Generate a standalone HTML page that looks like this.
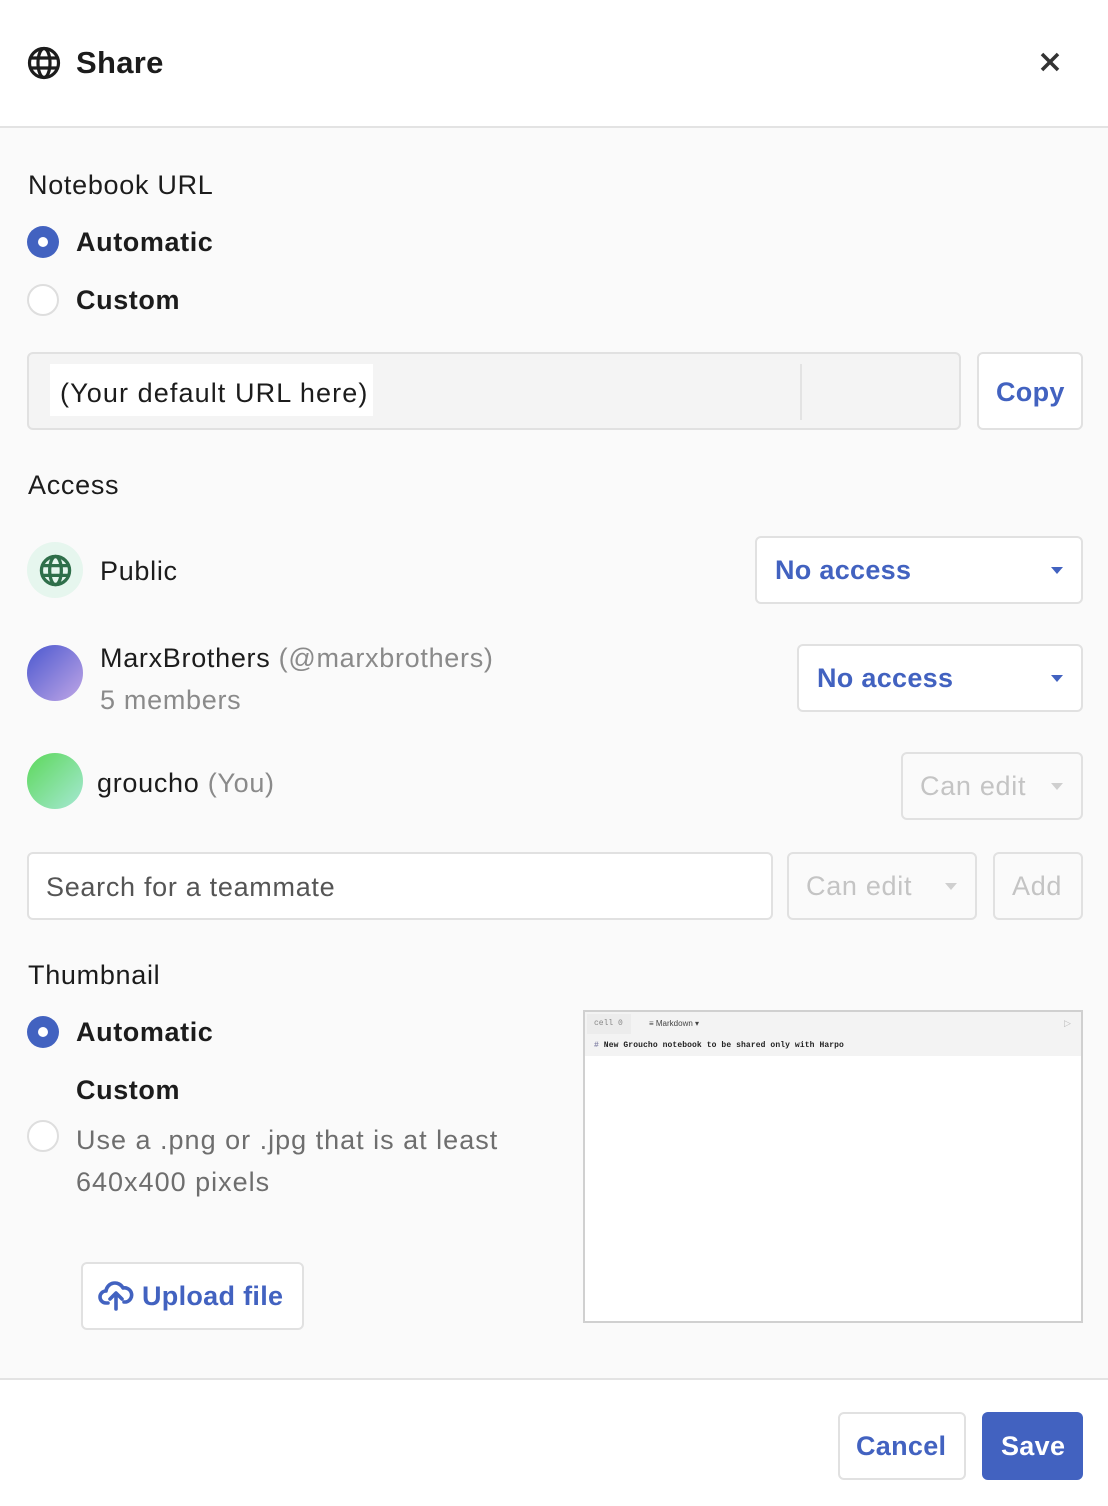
<!DOCTYPE html>
<html><head><meta charset="utf-8"><style>
*{box-sizing:border-box;margin:0;padding:0}
body{width:1108px;height:1506px;background:#fafafa;font-family:"Liberation Sans",sans-serif;color:#1c1c1c;position:relative;overflow:hidden;font-size:27px;letter-spacing:0.7px}
.a{position:absolute;white-space:nowrap;line-height:1}
.hdr{position:absolute;left:0;top:0;width:1108px;height:128px;background:#fff;border-bottom:2px solid #e3e3e3}
.ftr{position:absolute;left:0;top:1378px;width:1108px;height:128px;background:#fff;border-top:2px solid #e3e3e3}
.box{position:absolute;border:2px solid #e1e1e1;border-radius:6px;background:#fff}
.blue{color:#4262c0;font-weight:bold;letter-spacing:0.3px}
.gray{color:#8a8a8a}
.radio{position:absolute;width:32px;height:32px;border-radius:50%}
.on{background:#4262c0}
.on::after{content:"";position:absolute;left:11px;top:11px;width:10px;height:10px;border-radius:50%;background:#fff}
.off{background:#fff;border:2px solid #dedede}
.tri{position:absolute;width:0;height:0;border-left:6px solid transparent;border-right:6px solid transparent;border-top:7px solid #4262c0}
.trig{border-top-color:#cfcfcf}
.b{font-weight:bold;letter-spacing:0.6px}
</style></head><body>
<div class="hdr"></div>
<svg class="a" style="left:27px;top:46px" width="34" height="34" viewBox="0 0 34 34" fill="none" stroke="#1c1c1c" stroke-width="3.2"><circle cx="17" cy="17" r="14.5"/><ellipse cx="17" cy="17" rx="6" ry="14.5"/><line x1="2.5" y1="12" x2="31.5" y2="12"/><line x1="2.5" y1="22" x2="31.5" y2="22"/></svg>
<div class="a" style="left:76px;top:47px;font-size:31px;font-weight:bold;letter-spacing:0.3px">Share</div>
<svg class="a" style="left:1040px;top:52px" width="20" height="20" viewBox="0 0 20 20" stroke="#333" stroke-width="3.5"><line x1="2" y1="2" x2="18" y2="18"/><line x1="18" y1="2" x2="2" y2="18"/></svg>

<div class="a" style="left:28px;top:172px">Notebook URL</div>
<div class="radio on" style="left:27px;top:226px"></div>
<div class="a b" style="left:76px;top:229px">Automatic</div>
<div class="radio off" style="left:27px;top:284px"></div>
<div class="a b" style="left:76px;top:287px">Custom</div>

<div class="box" style="left:27px;top:352px;width:934px;height:78px;background:#f4f4f4"></div>
<div class="a" style="left:50px;top:364px;width:323px;height:52px;background:#fff"></div>
<div class="a" style="left:60px;top:380px;letter-spacing:1.1px">(Your default URL here)</div>
<div class="a" style="left:800px;top:364px;width:2px;height:56px;background:#e3e3e3"></div>
<div class="box" style="left:977px;top:352px;width:106px;height:78px"></div>
<div class="a blue" style="left:996px;top:379px">Copy</div>

<div class="a" style="left:28px;top:472px">Access</div>
<div class="a" style="left:27px;top:542px;width:56px;height:56px;border-radius:50%;background:#e6f6ee"></div>
<svg class="a" style="left:39px;top:554px" width="33" height="33" viewBox="0 0 34 34" fill="none" stroke="#2f6f4a" stroke-width="3.4"><circle cx="17" cy="17" r="14.5"/><ellipse cx="17" cy="17" rx="6" ry="14.5"/><line x1="2.5" y1="12" x2="31.5" y2="12"/><line x1="2.5" y1="22" x2="31.5" y2="22"/></svg>
<div class="a" style="left:100px;top:558px">Public</div>
<div class="box" style="left:755px;top:536px;width:328px;height:68px"></div>
<div class="a blue" style="left:775px;top:557px">No access</div>
<div class="tri" style="left:1051px;top:567px"></div>

<div class="a" style="left:27px;top:645px;width:56px;height:56px;border-radius:50%;background:linear-gradient(135deg,#4b58cf,#c0a6e6)"></div>
<div class="a" style="left:100px;top:645px">MarxBrothers <span class="gray">(@marxbrothers)</span></div>
<div class="a gray" style="left:100px;top:687px">5 members</div>
<div class="box" style="left:797px;top:644px;width:286px;height:68px"></div>
<div class="a blue" style="left:817px;top:665px">No access</div>
<div class="tri" style="left:1051px;top:675px"></div>

<div class="a" style="left:27px;top:753px;width:56px;height:56px;border-radius:50%;background:linear-gradient(135deg,#5cd85a,#a6e8d4)"></div>
<div class="a" style="left:97px;top:770px">groucho <span class="gray">(You)</span></div>
<div class="box" style="left:901px;top:752px;width:182px;height:68px;background:#fafafa"></div>
<div class="a" style="left:920px;top:773px;color:#c4c4c4">Can edit</div>
<div class="tri trig" style="left:1051px;top:783px"></div>

<div class="box" style="left:27px;top:852px;width:746px;height:68px"></div>
<div class="a" style="left:46px;top:874px;color:#555">Search for a teammate</div>
<div class="box" style="left:787px;top:852px;width:190px;height:68px;background:#fafafa"></div>
<div class="a" style="left:806px;top:873px;color:#c4c4c4">Can edit</div>
<div class="tri trig" style="left:945px;top:883px"></div>
<div class="box" style="left:993px;top:852px;width:90px;height:68px;background:#fafafa"></div>
<div class="a" style="left:1012px;top:873px;color:#c4c4c4">Add</div>

<div class="a" style="left:28px;top:962px">Thumbnail</div>
<div class="radio on" style="left:27px;top:1016px"></div>
<div class="a b" style="left:76px;top:1019px">Automatic</div>
<div class="a b" style="left:76px;top:1077px">Custom</div>
<div class="radio off" style="left:27px;top:1120px"></div>
<div class="a" style="left:76px;top:1127px;color:#6e6e6e;letter-spacing:1px">Use a .png or .jpg that is at least</div>
<div class="a" style="left:76px;top:1169px;color:#6e6e6e;letter-spacing:1px">640x400 pixels</div>
<div class="box" style="left:81px;top:1262px;width:223px;height:68px"></div>
<svg class="a" style="left:98px;top:1279px" width="36" height="32" viewBox="0 0 36 32" fill="none" stroke="#4262c0" stroke-width="3.6" stroke-linecap="round" stroke-linejoin="round"><path d="M10 24H8a6 6 0 0 1 0-12 9 9 0 0 1 17-3 7 7 0 0 1 3 14h-2"/><path d="M18 30V15M12 20l6-6 6 6"/></svg>
<div class="a blue" style="left:142px;top:1283px">Upload file</div>

<div class="a" style="left:583px;top:1010px;width:500px;height:313px;background:#fff;border:2px solid #d0d0d0"></div>
<div class="a" style="left:585px;top:1012px;width:496px;height:44px;background:#f3f3f3"></div>
<div class="a" style="left:587px;top:1014px;width:44px;height:20px;background:#ececec"></div>
<div class="a" style="left:594px;top:1020px;font-family:'Liberation Mono',monospace;font-size:8px;color:#888;letter-spacing:0">cell 0</div>
<div class="a" style="left:649px;top:1020px;font-size:8px;color:#444;letter-spacing:0">≡ Markdown ▾</div>
<div class="a" style="left:1064px;top:1019px;font-size:9px;color:#bbb">▷</div>
<div class="a" style="left:594px;top:1042px;font-family:'Liberation Mono',monospace;font-size:8px;font-weight:bold;color:#222;letter-spacing:0.1px"><span style="color:#88a">#</span> New Groucho notebook to be shared only with Harpo</div>

<div class="ftr"></div>
<div class="box" style="left:838px;top:1412px;width:128px;height:68px"></div>
<div class="a blue" style="left:856px;top:1433px">Cancel</div>
<div class="a" style="left:982px;top:1412px;width:101px;height:68px;background:#4262c0;border-radius:6px"></div>
<div class="a" style="left:1001px;top:1433px;color:#fff;font-weight:bold;letter-spacing:0.3px">Save</div>
</body></html>
